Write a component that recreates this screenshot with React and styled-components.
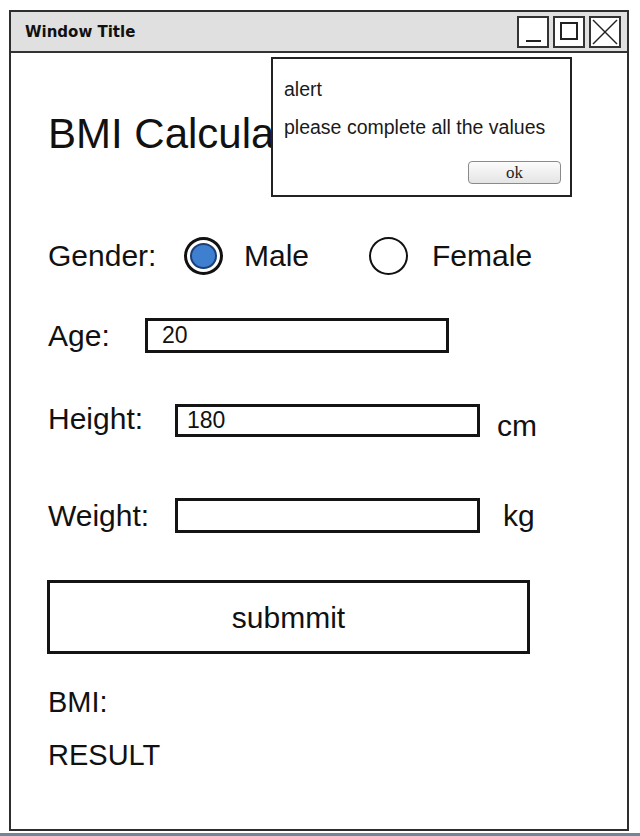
import React from 'react';
import styled, { createGlobalStyle } from 'styled-components';

const Global = createGlobalStyle`
  html, body { margin: 0; padding: 0; background: #ffffff; }
  body { font-family: "Liberation Sans", Arial, sans-serif; color: #111; }
`;

const Page = styled.div`
  width: 640px;
  height: 836px;
  box-sizing: border-box;
  padding-top: 10px;
  display: flex;
  flex-direction: column;
  overflow: hidden;
`;

const Window = styled.div`
  margin-left: 9px;
  width: 620px;
  height: 821px;
  box-sizing: border-box;
  border: 2px solid #2e2e2e;
  background: #fff;
  display: flex;
  flex-direction: column;
`;

const BottomStrip = styled.div`
  margin-top: 2px;
  height: 3px;
  background: #6f8796;
`;

const TitleBar = styled.div`
  height: 41px;
  box-sizing: border-box;
  flex: none;
  background: #e0e0e0;
  border-bottom: 2px solid #333;
  display: flex;
  align-items: center;
  justify-content: space-between;
  padding: 0 6px 0 14px;
`;

const TitleText = styled.span`
  font-family: "DejaVu Sans", "Liberation Sans", sans-serif;
  font-weight: bold;
  font-size: 15px;
  line-height: 15px;
  padding-top: 2px;
  color: #111;
`;

const WinButtons = styled.div`
  display: flex;
  gap: 4px;
`;

const WinButton = styled.div`
  width: 32px;
  height: 32px;
  box-sizing: border-box;
  border: 2px solid #333;
  background: #fff;
  display: flex;
  align-items: center;
  justify-content: center;
`;

const Content = styled.div`
  position: relative;
  flex: 1;
  display: flex;
  flex-direction: column;
  align-items: flex-start;
  padding-left: 37px;
`;

const Heading = styled.h1`
  margin: 60px 0 0 0;
  white-space: nowrap;
  font-weight: normal;
  font-size: 42px;
  line-height: 42px;
  color: #111;
`;

const Row = styled.div`
  display: flex;
  align-items: flex-start;
  height: ${p => p.$h}px;
  margin-top: ${p => p.$mt}px;
`;

const Label = styled.span`
  font-size: 30px;
  line-height: 30px;
  width: ${p => (p.$w ? `${p.$w}px` : 'auto')};
  margin-top: ${p => p.$dy || 0}px;
  margin-left: ${p => p.$ml || 0}px;
  flex: none;
  color: #111;
`;

const Field = styled.div`
  width: ${p => p.$w}px;
  height: ${p => p.$h}px;
  box-sizing: border-box;
  border: 3px solid #141414;
  background: #fff;
  padding-left: ${p => p.$pl}px;
  display: flex;
  align-items: center;
  font-size: 23px;
  line-height: 23px;
  color: #111;
  flex: none;
`;

const Radio = styled.span`
  width: 39px;
  height: 38px;
  box-sizing: border-box;
  border-radius: 50%;
  border: ${p => (p.$checked ? 3 : 2.5)}px solid #111;
  margin-left: ${p => p.$ml || 0}px;
  margin-right: ${p => p.$mr || 0}px;
  display: flex;
  align-items: center;
  justify-content: center;
  flex: none;
`;

const RadioDot = styled.span`
  width: 27px;
  height: 26px;
  box-sizing: border-box;
  border-radius: 50%;
  background: #3f7fd0;
  border: 2px solid #1d3f78;
`;

const SubmitButton = styled.div`
  margin-top: 47px;
  margin-left: -1px;
  width: 483px;
  height: 74px;
  box-sizing: border-box;
  border: 3px solid #141414;
  display: flex;
  align-items: center;
  justify-content: center;
  font-size: 30px;
  line-height: 30px;
  padding-top: 2px;
  color: #111;
`;

const Plain = styled.div`
  margin-top: ${p => p.$mt}px;
  font-size: 29px;
  line-height: 29px;
  color: #111;
`;

const Alert = styled.div`
  position: absolute;
  top: 4px;
  left: 260px;
  width: 301px;
  height: 140px;
  box-sizing: border-box;
  border: 2px solid #222;
  background: #fff;
  display: flex;
  flex-direction: column;
  align-items: flex-start;
  padding: 20px 9px 0 11px;
`;

const AlertText = styled.div`
  font-size: 19.5px;
  line-height: 20px;
  margin-top: ${p => p.$mt || 0}px;
  color: #1a1a1a;
`;

const OkButton = styled.div`
  align-self: flex-end;
  margin-top: 24px;
  width: 93px;
  height: 23px;
  box-sizing: border-box;
  border: 1px solid #8a8a8a;
  border-radius: 4px;
  background: linear-gradient(#fcfcfc, #e4e4e4);
  display: flex;
  align-items: center;
  justify-content: center;
  font-family: "Liberation Serif", "Times New Roman", serif;
  font-size: 17px;
  color: #222;
`;

export default function App() {
  return (
    <>
      <Global />
      <Page>
        <Window>
          <TitleBar>
            <TitleText>Window Title</TitleText>
            <WinButtons>
              <WinButton>
                <svg width="28" height="28" viewBox="0 0 28 28">
                  <line x1="7" y1="23" x2="22" y2="23" stroke="#222" strokeWidth="2" />
                </svg>
              </WinButton>
              <WinButton>
                <svg width="28" height="28" viewBox="0 0 28 28">
                  <rect x="6" y="5" width="16" height="16" fill="none" stroke="#222" strokeWidth="2" />
                </svg>
              </WinButton>
              <WinButton>
                <svg width="28" height="28" viewBox="0 0 28 28">
                  <line x1="2" y1="2" x2="26" y2="26" stroke="#222" strokeWidth="1.5" />
                  <line x1="26" y1="2" x2="2" y2="26" stroke="#222" strokeWidth="1.5" />
                </svg>
              </WinButton>
            </WinButtons>
          </TitleBar>
          <Content>
            <Heading>BMI Calculator</Heading>

            <Row $h={38} $mt={82}>
              <Label $w={136} $dy={4}>Gender:</Label>
              <Radio $checked $mr={21}><RadioDot /></Radio>
              <Label $dy={4}>Male</Label>
              <Radio $ml={60} $mr={24} />
              <Label $dy={4}>Female</Label>
            </Row>

            <Row $h={35} $mt={43}>
              <Label $w={97} $dy={3}>Age:</Label>
              <Field $w={304} $h={35} $pl={14}>20</Field>
            </Row>

            <Row $h={33} $mt={51}>
              <Label $w={127} $dy={0}>Height:</Label>
              <Field $w={305} $h={33} $pl={9}>180</Field>
              <Label $ml={17} $dy={7}>cm</Label>
            </Row>

            <Row $h={35} $mt={61}>
              <Label $w={127} $dy={3}>Weight:</Label>
              <Field $w={305} $h={35} $pl={9}></Field>
              <Label $ml={23} $dy={3}>kg</Label>
            </Row>

            <SubmitButton>submmit</SubmitButton>

            <Plain $mt={34}>BMI:</Plain>
            <Plain $mt={24}>RESULT</Plain>

            <Alert>
              <AlertText>alert</AlertText>
              <AlertText $mt={18}>please complete all the values</AlertText>
              <OkButton>ok</OkButton>
            </Alert>
          </Content>
        </Window>
        <BottomStrip />
      </Page>
    </>
  );
}
